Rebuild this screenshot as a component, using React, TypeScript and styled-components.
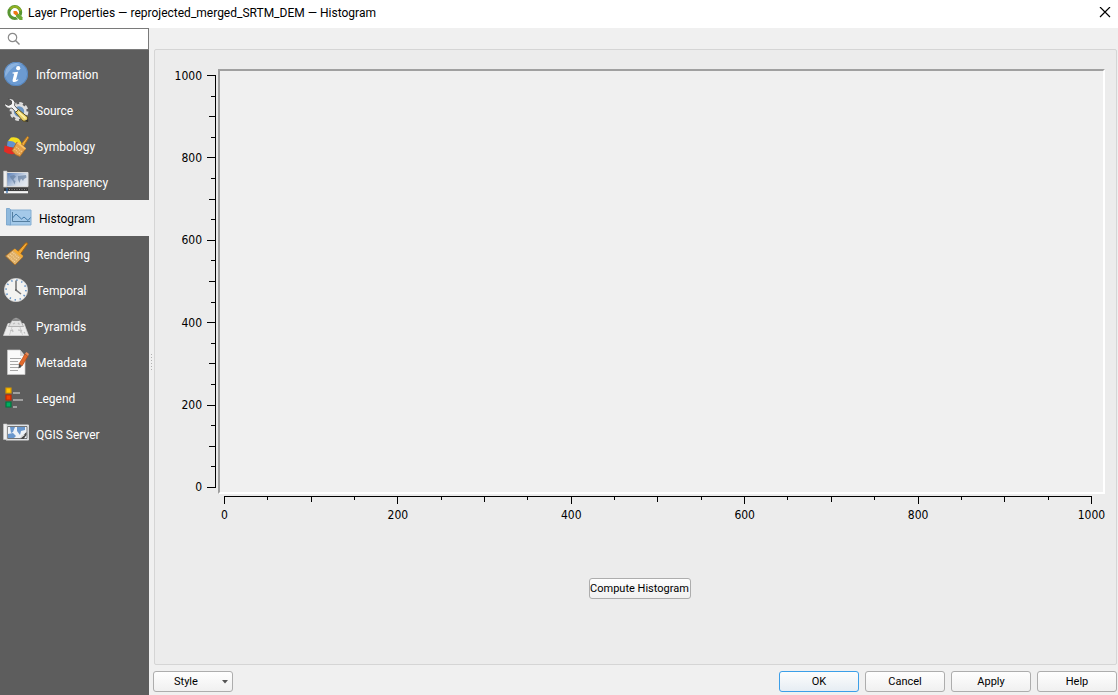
import React from "react";
import styled, { createGlobalStyle, css } from "styled-components";

const GlobalStyle = createGlobalStyle`
  * { box-sizing: border-box; }
  body {
    margin: 0;
    background: #f0f0f0;
    color: #000;
    font-family: Roboto, "Noto Sans", sans-serif;
    font-size: 12px;
  }
`;

const Dialog = styled.div`
  display: flex;
  flex-direction: column;
  min-height: 100vh;
`;

const TitleBar = styled.header`
  display: flex;
  align-items: center;
  gap: 5px;
  height: 28px;
  padding: 0 7px 3px;
  background: #fff;
`;

const Title = styled.h1`
  flex: 1;
  margin: 0;
  font-size: 12px;
  font-weight: 400;
  line-height: 20px;
  white-space: nowrap;
`;

const CloseButton = styled.button`
  display: flex;
  padding: 0;
  border: 0;
  background: none;
`;

const Body = styled.div`
  display: flex;
  flex: 1;
`;

const Sidebar = styled.aside`
  flex: none;
  width: 149px;
  background: #5d5d5d;
`;

const SearchBox = styled.label`
  display: flex;
  align-items: center;
  gap: 4px;
  height: 22px;
  padding: 0 7px;
  border: 1px solid #7a7a7a;
  border-left: 0;
  background: #fff;
`;

const SearchInput = styled.input`
  flex: 1;
  min-width: 0;
  padding: 0;
  border: 0;
  outline: 0;
  background: transparent;
  font: inherit;
`;

const NavList = styled.nav`
  display: flex;
  flex-direction: column;
  padding-top: 6px;
`;

const NavItem = styled.button<{ $active?: boolean }>`
  display: flex;
  align-items: center;
  gap: 7px;
  height: 36px;
  padding: 0 3px;
  border: 0;
  background: none;
  color: #fff;
  font: inherit;
  line-height: 20px;
  text-align: left;
  ${(p) =>
    p.$active &&
    css`
      padding-left: 6px;
      background: #f0f0f0;
      color: #000;
    `}
`;

const NavIcon = styled.svg`
  flex: none;
  width: 26px;
  height: 26px;
`;

const NavLabel = styled.span`
  padding-top: 2px;
`;

const Splitter = styled.div`
  display: flex;
  flex-direction: column;
  flex: none;
  align-items: center;
  justify-content: center;
  gap: 2px;
  width: 4px;
`;

const Grip = styled.span`
  width: 1px;
  height: 1px;
  background: #b0b0b0;
`;

const Main = styled.main`
  display: flex;
  flex: 1;
  flex-direction: column;
  min-width: 0;
  padding: 21px 1px 3px 0;
`;

const Panel = styled.section`
  display: flex;
  flex: 1;
  flex-direction: column;
  margin-left: 1px;
  padding: 19px 11px 65px 19px;
  border: 1px solid #d5d5d5;
  border-radius: 2px;
  background: #ececec;
`;

const Plot = styled.div`
  display: grid;
  flex: 1;
  grid-template-columns: 44px 1fr;
  grid-template-rows: 1fr auto;
`;

const Canvas = styled.div`
  border: 2px solid;
  border-color: #a0a0a0 #fff #fff #a0a0a0;
  background: #f0f0f0;
`;

const YAxis = styled.div`
  display: flex;
  justify-content: flex-end;
  gap: 5px;
  padding: 6px 2px 6px 0;
`;

const YLabels = styled.div`
  display: flex;
  flex-direction: column;
  align-items: flex-end;
  justify-content: space-between;
`;

const YScale = styled.div`
  display: flex;
  flex-direction: column;
  align-items: flex-end;
  justify-content: space-between;
  width: 9px;
  border-right: 1px solid #000;
`;

const YTick = styled.span<{ $length: number }>`
  width: ${(p) => p.$length}px;
  height: 1px;
  background: #000;
`;

const XAxis = styled.div`
  display: flex;
  grid-column: 2;
  flex-direction: column;
  gap: 10px;
  padding: 2px 13px 0 6px;
`;

const XScale = styled.div`
  display: flex;
  align-items: flex-start;
  justify-content: space-between;
  height: 8px;
  border-top: 1px solid #000;
`;

const XTick = styled.span<{ $length: number }>`
  width: 1px;
  height: ${(p) => p.$length}px;
  background: #000;
`;

const XLabels = styled.div`
  display: flex;
  justify-content: space-between;
`;

const AxisLabel = styled.span<{ $axis: "x" | "y" }>`
  display: flex;
  align-items: center;
  justify-content: ${(p) => (p.$axis === "x" ? "center" : "flex-end")};
  width: ${(p) => (p.$axis === "x" ? "1px" : "auto")};
  height: 1px;
  font-family: "DejaVu Sans Condensed", "Noto Sans", sans-serif;
  font-size: 12px;
  line-height: 16px;
`;

const Actions = styled.div`
  display: flex;
  justify-content: center;
  padding: 63px 0 0;
`;

const Button = styled.button<{ $primary?: boolean; $fit?: boolean }>`
  display: flex;
  align-items: center;
  justify-content: center;
  width: ${(p) => (p.$fit ? "102px" : "80px")};
  height: 21px;
  padding: 1px 0 0;
  border: 1px solid ${(p) => (p.$primary ? "#3c9fe8" : "#adadad")};
  border-radius: 3px;
  background: ${(p) =>
    p.$primary
      ? "linear-gradient(#fdfdfd, #e6edf3)"
      : "linear-gradient(#fefefe, #f0f0f0)"};
  color: #000;
  font-family: Roboto, "Noto Sans", sans-serif;
  font-size: 11px;
  line-height: 16px;
  white-space: nowrap;
`;

const MenuButton = styled(Button)`
  justify-content: space-between;
  padding: 1px 4px 0 20px;
`;

const Footer = styled.footer`
  display: flex;
  gap: 6px;
  padding-top: 6px;
`;

const Spacer = styled.span`
  flex: 1;
`;

const icons: Record<string, React.ReactNode> = {
  Information: (
    <>
      <circle cx="13" cy="13" r="12" fill="#6c9bd2" />
      <path d="M2 17A12 12 0 0 1 20 3Q9 3 2 17Z" fill="#8bb2df" />
      <circle cx="13" cy="13" r="11.6" fill="none" stroke="#4f7fb8" strokeWidth=".8" />
      <circle cx="15.2" cy="7.2" r="2.1" fill="#fff" />
      <path
        d="M9.5 11.6l5.6-.9-2 7.7q-.3 1.4 1.9-.1l.4.8q-2.200 2-4 2-2.400 0-1.700-2.700l1.500-5.600-1.700-.3z"
        fill="#fff"
      />
    </>
  ),
  Source: (
    <>
      <circle cx="16" cy="14.500" r="8.200" fill="none" stroke="#dedede" strokeWidth="2.400" strokeDasharray="3.700 2.740" />
      <circle cx="16" cy="14.500" r="6.400" fill="#6b96c4" stroke="#dedede" strokeWidth="2.400" />
      <path
        d="M5 2q5.500-1.500 7 3.500l-.5 3 5.500 6-2.500 2.500L9 11Q4 12.500 1.500 8V6.500l4 2 3-1.500V4z"
        fill="#f4f4f4"
        stroke="#4e4e4e"
        strokeWidth=".9"
      />
      <path d="M12.500 15.500l3-3 9 7.500.5 4.500-5-.5z" fill="#ecd46a" stroke="#5f5120" strokeWidth="1" />
      <path d="M15.500 15l7 6.500" stroke="#fff2a8" strokeWidth="1.600" />
      <path d="M25 22v3l-3.500-1z" fill="#333" />
    </>
  ),
  Symbology: (
    <>
      <path d="M8 4.500q5-1 8 1.500l3 5-6 2L5 8z" fill="#f5df20" />
      <path d="M4.500 8.500Q9 7 13 10.500l2 5-11-2z" fill="#6192d0" />
      <path d="M1.500 12.500l9 2.500 3 5.500Q6 22.500 1 18.500z" fill="#e32b24" />
      <path d="M18.500 11l6-7.500 1.200 1L20.500 13z" fill="#efae43" stroke="#b87418" strokeWidth="1" />
      <path d="M14 9l8.500 7-5.500 7.500q-5-1-8-6z" fill="#e3a04b" stroke="#a96a1e" strokeWidth=".8" />
      <path d="M11.500 16l5.500 5M13.500 14l5.500 5" stroke="#f9cf8b" strokeWidth="1.200" strokeDasharray="1 1" />
      <path d="M14.500 9.500l8 6.500" stroke="#ffc35f" strokeWidth="1.800" />
    </>
  ),
  Transparency: (
    <>
      <defs>
        <linearGradient id="fade" x2="1" y2=".6">
          <stop stopColor="#4a74b2" />
          <stop offset=".75" stopColor="#d3dce8" />
          <stop offset="1" stopColor="#e2e7ee" />
        </linearGradient>
      </defs>
      <path d="M2 3.500h23v14H2z" fill="url(#fade)" stroke="#d9d9d9" />
      <path d="M.5 2H4v16H.5z" fill="#eee" stroke="#b8b8b8" strokeWidth=".6" />
      <path d="M7 7l4-1 2 1.500-2 2-.500 1.500 2 1-1 3.500-1.500-3.500L7.500 9zM15 7l8-1 .5 2.500-2.500 1.500-1 2-1.500-2-1 .5L16.500 14 15 10.500z" fill="#657f9f" opacity=".7" />
      <path d="M1 20.500h24" stroke="#333" strokeWidth="2.500" />
      <path d="M6 20.500h18" stroke="#898989" strokeDasharray="1 1.500" />
      <path d="M1 23.200h24" stroke="#f5f5f5" strokeWidth="2.200" />
      <path d="M4 19v5" stroke="#2563a8" strokeWidth="1.200" />
    </>
  ),
  Histogram: (
    <>
      <path d="M3.500 5H25v15H3.500z" fill="#a4c9e9" stroke="#84aed2" />
      <path d="M.5 3.500h3l1 1v15.500H.5z" fill="#8fb9dd" stroke="#72a0c9" strokeWidth=".8" />
      <path d="M6.500 7v9.500H24" fill="none" stroke="#557e9f" strokeWidth="1" />
      <path d="M6.500 13l3.500-4 5.500 5 2.500-2 4 3.500 2.500-3" fill="none" stroke="#427aa9" strokeWidth="1" />
    </>
  ),
  Rendering: (
    <>
      <path d="M14.500 11l8-9q2-1 2 1L17.500 13z" fill="#f0a735" stroke="#a5630d" strokeWidth="1" />
      <path d="M10.500 8.500L19.500 16.500l-7.500 7.500-9.500-9z" fill="#deb06a" stroke="#a86c20" strokeWidth=".8" />
      <path d="M5 15l7.500 6.500M7 13l7.500 6.500M9 11l7.500 6.500" stroke="#f8d49a" strokeWidth="1.200" strokeDasharray="1 1" />
      <path d="M11 8.500l8.500 7.500" stroke="#f5aa31" strokeWidth="2.500" />
    </>
  ),
  Temporal: (
    <>
      <circle cx="13" cy="13" r="11.600" fill="#f3f3f1" stroke="#d6d6d6" strokeWidth=".8" />
      <circle cx="13" cy="13" r="9.900" fill="none" stroke="#5f91c8" strokeWidth="1.600" strokeDasharray="1.400 3.783" />
      <path d="M13 3.500V13l5 4" fill="none" stroke="#777" strokeWidth="1.600" />
      <circle cx="13" cy="13" r="1" fill="#666" />
    </>
  ),
  Pyramids: (
    <>
      <path d="M5 10.500h16L25.500 22.500H.5z" fill="#ececec" stroke="#d8d8d8" strokeWidth=".7" />
      <path d="M9 7.500L13 5l4.500 2.500 3 6h-15z" fill="#e2e2e2" stroke="#9b9b9b" strokeWidth=".7" />
      <path d="M10.500 5.500h5l1.500 2.500H9z" fill="#8f8f8f" />
      <path d="M10 11l2-1M15 10l1.500 1.500M7 18l2.500-1 .5 2M15 17l3.500.5-1 2M21 19l1 1.500" fill="none" stroke="#bcbcbc" strokeWidth="1.200" />
      <path d="M9 14L6.500 22M17 14l2.500 8" stroke="#c8c8c8" strokeWidth=".8" />
    </>
  ),
  Metadata: (
    <>
      <path d="M4.500 1h12.500l5 6v18.500h-17.500z" fill="#fafafa" stroke="#c7c7c7" strokeWidth=".7" />
      <path d="M17 1v6h5z" fill="#d5d5d5" />
      <path d="M7 9.500h11M7 12.500h8M7 15.500h11M7 18.500h11M7 21.500h8" stroke="#a7a7a7" />
      <path d="M22 5l3 2-6 10-3-2z" fill="#e36a2b" stroke="#ad481a" strokeWidth=".7" />
      <path d="M22 4.500l1.500-1.500 2.500 2-1 2z" fill="#e88b58" />
      <path d="M16 15l3 2-3.500 2.500z" fill="#464646" />
    </>
  ),
  Legend: (
    <>
      <path d="M3 3h5v5H3z" fill="#ffc400" stroke="#d99800" strokeWidth="1.200" />
      <path d="M3 10h5v5H3z" fill="#ef4200" stroke="#c22700" strokeWidth="1.200" />
      <path d="M3 17h5v5H3z" fill="#00ad61" stroke="#00753d" strokeWidth="1.200" />
      <path d="M10 8h7M10 15h10M10 22h4" stroke="#a0a0a0" strokeWidth="2" />
    </>
  ),
  "QGIS Server": (
    <>
      <path d="M3 4h22.500v15H3z" fill="#e9eef4" stroke="#d6d6d6" />
      <path d="M4.500 5.500h19.500v12H4.500z" fill="#eef2f7" stroke="#555" strokeWidth=".8" />
      <path d="M.5 3h3.500v15.500H.5z" fill="#efefef" stroke="#c4c4c4" strokeWidth=".6" />
      <path d="M7 6h5l-2 5-2 1zM5 13l5-1 3 3-2 2H5zM14 6h8v3l-4 1-1 4-3-4z" fill="#6997cd" />
      <path d="M17 17.500l6.500-6.500v3l-3 4z" fill="#424242" />
      <path d="M17.500 17.500l.5-3 4.500-1z" fill="#ddd" />
    </>
  ),
};

const sections = Object.keys(icons);
const axisValues = [0, 200, 400, 600, 800, 1000];
const ticks = Array.from({ length: 21 }, (_, i) => i);

/* Major ticks carry a label; medium ones sit halfway between them. */
const tickLength = (i: number) => (i % 4 === 0 ? 8 : i % 2 === 0 ? 6 : 4);

export default function App() {
  return (
    <Dialog>
      <GlobalStyle />
      <TitleBar>
        <svg width="16" height="16" viewBox="0 0 16 16" aria-hidden="true">
          <circle cx="7.800" cy="7.500" r="5.900" fill="none" stroke="#589632" strokeWidth="3" />
          <path d="M3 4A6 6 0 0 1 13.500 6" fill="none" stroke="#93b023" strokeWidth="2" />
          <path d="M9.500 9.500l5.500 5.500" stroke="#fff" strokeWidth="4.500" />
          <path d="M9 9h3.500l3 3.300V15h-2.800L9 11.500z" fill="#6faa36" />
          <path d="M6.500 6h3l2 2.500-2.500 2-2.500-2z" fill="#ee7913" />
        </svg>
        <Title>Layer Properties — reprojected_merged_SRTM_DEM — Histogram</Title>
        <CloseButton aria-label="Close">
          <svg width="12" height="12" viewBox="0 0 12 12">
            <path d="M1 0l10 10M11 0L1 10" stroke="#000" strokeWidth="1.200" />
          </svg>
        </CloseButton>
      </TitleBar>
      <Body>
        <Sidebar>
          <SearchBox>
            <svg width="14" height="14" viewBox="0 0 14 14" aria-hidden="true">
              <circle cx="5.500" cy="5.500" r="4.200" fill="none" stroke="#8a8a8a" strokeWidth="1.200" />
              <path d="M8.500 8.500l4 4" stroke="#8a8a8a" strokeWidth="1.400" />
            </svg>
            <SearchInput type="text" aria-label="Search" />
          </SearchBox>
          <NavList>
            {sections.map((name) => (
              <NavItem key={name} $active={name === "Histogram"}>
                <NavIcon viewBox="0 0 26 26" aria-hidden="true">
                  {icons[name]}
                </NavIcon>
                <NavLabel>{name}</NavLabel>
              </NavItem>
            ))}
          </NavList>
        </Sidebar>
        <Splitter>
          {[0, 1, 2, 3, 4, 5].map((i) => (
            <Grip key={i} />
          ))}
        </Splitter>
        <Main>
          <Panel>
            <Plot>
              <YAxis>
                <YLabels>
                  {[...axisValues].reverse().map((v) => (
                    <AxisLabel key={v} $axis="y">
                      {v}
                    </AxisLabel>
                  ))}
                </YLabels>
                <YScale>
                  {ticks.map((i) => (
                    <YTick key={i} $length={tickLength(i)} />
                  ))}
                </YScale>
              </YAxis>
              <Canvas />
              <XAxis>
                <XScale>
                  {ticks.map((i) => (
                    <XTick key={i} $length={tickLength(i) - 1} />
                  ))}
                </XScale>
                <XLabels>
                  {axisValues.map((v) => (
                    <AxisLabel key={v} $axis="x">
                      {v}
                    </AxisLabel>
                  ))}
                </XLabels>
              </XAxis>
            </Plot>
            <Actions>
              <Button $fit>Compute Histogram</Button>
            </Actions>
          </Panel>
          <Footer>
            <MenuButton>
              Style
              <svg width="6" height="4" viewBox="0 0 6 4" aria-hidden="true">
                <path d="M0 0h6L3 3.500z" fill="#555" />
              </svg>
            </MenuButton>
            <Spacer />
            <Button $primary>OK</Button>
            <Button>Cancel</Button>
            <Button>Apply</Button>
            <Button>Help</Button>
          </Footer>
        </Main>
      </Body>
    </Dialog>
  );
}
